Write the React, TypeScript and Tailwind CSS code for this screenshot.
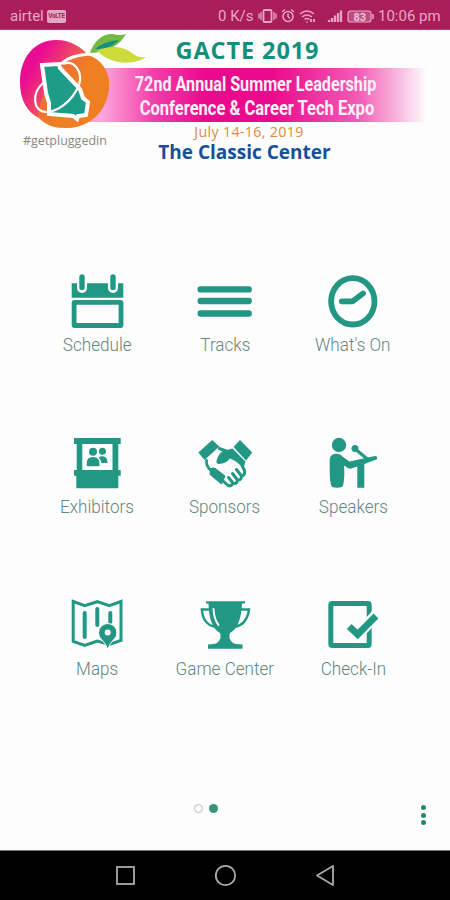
import * as React from "react";

interface MenuItem {
  label: string;
  icon: React.ReactNode;
}

const green = "#229783";

const menuItems: MenuItem[] = [
  {
    label: "Schedule",
    icon: (
      <>
        <path d="M4.700 13.300H56.300V27.700H4.700z" fill={green} />
        <path d="M15 9v9M46 9v9" stroke="white" strokeWidth="10" strokeLinecap="round" />
        <path d="M15 7v10.500M46 7v10.500" stroke={green} strokeWidth="5.400" strokeLinecap="round" />
        <rect x="7.100" y="32.300" width="46.900" height="23.200" rx="0.500" stroke={green} strokeWidth="4.800" />
      </>
    ),
  },
  {
    label: "Tracks",
    icon: (
      <path
        d="M5.700 19.400H53.700M5.700 31H53.700M5.700 43.500H53.700"
        stroke={green}
        strokeWidth="6.400"
        strokeLinecap="round"
      />
    ),
  },
  {
    label: "What's On",
    icon: (
      <>
        <ellipse cx="29.800" cy="31.300" rx="21.700" ry="23.200" stroke={green} strokeWidth="5.800" />
        <path
          d="M18.800 31.300H29.700L40 23.500"
          stroke={green}
          strokeWidth="5.800"
          strokeLinecap="round"
          strokeLinejoin="round"
        />
      </>
    ),
  },
  {
    label: "Exhibitors",
    icon: (
      <>
        <path
          d="M7 6H53.700V12H51.300V38H53.700V43.700H51.300V56.300H9.300V43.700H7V38H9.700V12H7z"
          fill={green}
        />
        <path d="M15.300 12H45.500V38H15.300z" fill="white" />
        <circle cx="26" cy="19.700" r="4" fill={green} />
        <circle cx="35.400" cy="19.200" r="3.500" fill={green} />
        <path d="M31.500 25.500Q34 23.700 37 24.500Q40.500 25.500 40.500 31H34.500Q34 27.500 31.500 25.500z" fill={green} />
        <path d="M19.700 34.300V31q0-6 6.300-6t6.500 6v3.300z" fill={green} />
      </>
    ),
  },
  {
    label: "Sponsors",
    icon: (
      <>
        <path d="M3.300 20.500L17.300 8L24.300 14.500L9.500 28z" fill={green} />
        <path d="M45 8L57.300 20.500L51 28.500L38.500 15z" fill={green} />
        <path
          d="M21.500 29Q23 22 28 19L37.500 16.500L50.500 29.500L48.500 36L41 29.500L35 26.500Q31 31.500 24 32Q21 32 21.500 29z"
          fill={green}
        />
        <path d="M24.300 16.500L31 19" stroke={green} strokeWidth="3" strokeLinecap="round" />
        <path d="M11.500 28.500Q11 34 15.500 38" stroke={green} strokeWidth="2.800" strokeLinecap="round" />
        <path d="M15.500 37Q18 34.500 21 37L30 44L26.500 52L15 42.500z" fill={green} stroke={green} strokeLinejoin="round" />
        <path
          d="M27 48L33 53.500Q36 55 38 51Q42 52.500 42.500 48Q46.500 48.500 46.500 44Q50.500 43.500 49.500 38.500L47 33.500M33.500 45.500L38 51M37.500 41.500L42.500 48M41.500 37.500L46.500 44"
          stroke={green}
          strokeWidth="3"
          strokeLinecap="round"
          strokeLinejoin="round"
        />
      </>
    ),
  },
  {
    label: "Speakers",
    icon: (
      <>
        <circle cx="16" cy="13" r="7.200" fill={green} />
        <path
          d="M8.500 54Q6.700 50 6.700 38V28Q6.700 22 13 21.700Q17 21.500 20 25L26.500 29.500L52 24Q54.500 24 54 27.300L41.300 32V55.700H34.300V34.500L27.500 36.800Q24 36 21 33.500Q22 45 20 54Q19 55.700 14 55.700T8.500 54z"
          fill={green}
        />
        <circle cx="32" cy="16.400" r="3.500" fill={green} />
        <path d="M34 18.500L45 27.500" stroke={green} strokeWidth="3.200" />
      </>
    ),
  },
  {
    label: "Maps",
    icon: (
      <>
        <path
          d="M6.200 7.500L17.700 11.700L30.300 7.700L42.300 11.700L54 7.500V46.500L42.300 50.500L30.300 47L17.700 51.500L6.200 47.500z"
          stroke={green}
          strokeWidth="3"
        />
        <path d="M17.700 19V43M30.300 15V31M43.300 19V28" stroke={green} strokeWidth="4" strokeLinecap="round" />
        <path
          d="M40.700 55.500Q39.500 50.500 35 46Q31.500 43 31.500 38.700A9.200 9.200 0 0 1 49.900 38.700Q49.900 43 46.400 46Q42 50.500 40.700 55.500z"
          fill={green}
          stroke="white"
          strokeWidth="1"
        />
        <circle cx="40.700" cy="38.500" r="3" fill="white" />
      </>
    ),
  },
  {
    label: "Game Center",
    icon: (
      <>
        <path
          d="M11 7.300H50V9.500H47Q46 33 35 39Q33 44 37 48Q38 50 47.500 50.500V54.700H13V50.500Q22 50 23 48Q27 44 25 39Q14 33 13.500 9.500H11z"
          fill={green}
        />
        <path
          d="M15 15.500H6.800Q8 31 21 33M46 15.500H54Q52 31 39 33"
          stroke={green}
          strokeWidth="2.400"
        />
        <path d="M18.500 15Q19 25 23.500 31" stroke="white" strokeWidth="2" strokeLinecap="round" />
      </>
    ),
  },
  {
    label: "Check-In",
    icon: (
      <>
        <rect x="7.800" y="9.500" width="38.400" height="42" rx="1.500" stroke={green} strokeWidth="5" />
        <path d="M26.700 34L34.700 41L54 20" stroke="white" strokeWidth="11" />
        <path d="M26.200 32.500L34.700 40.500L53 22" stroke={green} strokeWidth="6.800" />
      </>
    ),
  },
];

function StatusBar() {
  return (
    <div className="flex h-[30px] shrink-0 items-center border-b border-[#b04078] bg-[#a91d58] pt-[3px] pl-[10px] font-['Roboto',sans-serif] text-[14px] leading-none text-[#e9a5c4]">
      <span className="w-[35px] text-[15px]">airtel</span>
      <span className="mt-px ml-[2px] flex h-[13px] w-[19px] items-center justify-center rounded-[2px] bg-[#e9a5c4] text-[6.500px] font-bold tracking-tighter text-[#a91d58]">
        VoLTE
      </span>
      <span className="ml-[152px] w-[37px] text-[15px] whitespace-nowrap">0 K/s</span>
      <svg className="ml-[3px] shrink-0" width="116" height="18" viewBox="0 0 116 18" fill="none" stroke="#e9a5c4">
        <rect x="5.500" y="3" width="8" height="12" rx="1" strokeWidth="1.800" />
        <path d="M3 5v8M1 6.500v5M16 5v8M18 6.500v5" strokeWidth="1.300" />
        <circle cx="30" cy="9.500" r="5" strokeWidth="1.500" />
        <path d="M30 6.500v3l2 2M24 5l3-2.500M36 5l-3-2.500" strokeWidth="1.400" />
        <path d="M42 7q7-6 14 0M44 10q5-4 10 0M46.500 12.500q2.500-2 5 0" strokeWidth="1.600" />
        <path d="M48.500 15h1M53 15v-3M56 12v3" strokeWidth="1.800" />
        <path d="M71 15v-2M74 15v-4M77 15V8.500M80 15V6M83 15V3.500" strokeWidth="2.300" />
        <rect x="90" y="4" width="23" height="11" rx="2.500" fill="#e9a5c4" fillOpacity="0.350" strokeWidth="1.200" />
        <path d="M115 7v5" strokeWidth="1.500" />
        <text x="95.500" y="13.500" fontSize="11" fontWeight="700" fill="#f3c3d8" stroke="none">
          83
        </text>
      </svg>
      <span className="ml-[4px] text-[15px] whitespace-nowrap">10:06 pm</span>
    </div>
  );
}

function PeachLogo() {
  return (
    <svg className="absolute top-0 left-[10px]" width="150" height="104" viewBox="0 0 150 104" fill="none">
      <defs>
        <linearGradient id="peach" gradientUnits="userSpaceOnUse" x1="18" y1="28" x2="66" y2="58">
          <stop offset="0.150" stopColor="#ea0b93" />
          <stop offset="0.600" stopColor="#ee4568" />
          <stop offset="1" stopColor="#f07c25" />
        </linearGradient>
      </defs>
      <path
        d="M46 10C62 10 72 18 78 25C92 30 99 41 99 55C99 80 80 98 56 98C44 98 36 95 29 88C17 82 10 70 10 52C10 27 25 10 46 10z"
        fill="url(#peach)"
      />
      <path
        d="M52 36C58 27 68 24 78 25C92 30 99 41 99 55C99 80 80 98 56 98C44 98 36 95 29 88C27 80 32 60 52 36z"
        fill="#f08022"
        fillOpacity="0.700"
      />
      <path d="M51 34Q60 25 82 24" stroke="white" strokeWidth="3" />
      <path
        d="M32 35L49 34L50 38L70 59L73 68L78 72L76 85L68 86L67 89L63 86L39 84L39 73L36 63z"
        fill="#1f9b8a"
        stroke="white"
        strokeWidth="4"
      />
      <path
        d="M53 34C65 29 73 43 69 55C62 72 47 82 36 82C22 81 22 63 33 53"
        stroke="white"
        strokeWidth="2.200"
      />
      <path d="M80 23C84 10 94 3 103 4Q109 6 116 4C109 16 98 22 80 23z" fill="#75b944" />
      <path d="M85 19C92 13 100 11 109 10C102 17 94 19 85 19z" fill="#128f85" />
      <path d="M87 21C101 14 115 17 122 23Q127 28 136 27C126 34 104 37 87 21z" fill="#cbdc3b" />
    </svg>
  );
}

function Banner() {
  return (
    <header className="relative h-[134px] shrink-0">
      <h1 className="flex h-[38px] items-center justify-center pt-[3px] pl-[45px] font-['Open_Sans',sans-serif] text-[23.500px] leading-none font-bold tracking-[0.900px] whitespace-nowrap text-[#158f7c]">
        GACTE 2019
      </h1>
      <div className="ml-[85px] flex h-[54px] w-[342px] flex-col items-center justify-center bg-[linear-gradient(to_right,#fba6da_5%,#f23fa9_20%,#ec0a8c_35%,#ec0a8c_55%,#f35cb6_80%,#fdfdfd_100%)] pt-px font-['Roboto',sans-serif] text-[20px] leading-[24px] font-bold whitespace-nowrap text-[#fff0fa]">
        <span className="scale-x-[0.807]">72nd Annual Summer Leadership</span>
        <span className="ml-[2px] scale-x-[0.826]">Conference &amp; Career Tech Expo</span>
      </div>
      <p className="pl-[48px] text-center font-['Open_Sans',sans-serif] text-[14.300px] leading-[20px] tracking-[0.300px] text-[#df8a3d]">
        July 14-16, 2019
      </p>
      <p className="pl-[39px] text-center font-['Open_Sans',sans-serif] text-[19px] leading-[20px] font-bold text-[#15509b]">
        The Classic Center
      </p>
      <PeachLogo />
      <span className="absolute top-[103px] left-[23px] font-['Open_Sans',sans-serif] text-[12.500px] leading-[16px] text-[#8a8782]">
        #getpluggedin
      </span>
    </header>
  );
}

function NavigationBar() {
  return (
    <nav className="h-[50px] shrink-0 border-t border-[#777] bg-black">
      <svg width="450" height="49" viewBox="0 0 450 49" fill="none" stroke="#aaa" strokeWidth="1.800">
        <rect x="117" y="16" width="17" height="17" />
        <circle cx="225.500" cy="24.500" r="9.700" />
        <path d="M317 24.500L333 15V34z" strokeLinejoin="round" />
      </svg>
    </nav>
  );
}

export default function App() {
  return (
    <div className="flex h-[900px] w-[450px] flex-col overflow-hidden bg-[#fdfdfd]">
      <StatusBar />
      <Banner />
      <main className="mt-[106px] grid grid-cols-3 px-[33px]">
        {menuItems.map((item) => (
          <div key={item.label} className="flex h-[162px] flex-col items-center">
            <svg width="60" height="60" viewBox="0 0 60 60" fill="none">
              {item.icon}
            </svg>
            <span className="mt-[3px] scale-x-[0.950] font-['Roboto',sans-serif] text-[18px] leading-[24px] font-light whitespace-nowrap text-[#63867e]">
              {item.label}
            </span>
          </div>
        ))}
      </main>
      <footer className="relative flex grow items-center justify-center pt-[10px]">
        <div className="mr-[38px] flex gap-[6px]">
          <span className="size-[9px] rounded-full border border-[#bbb]" />
          <span className="size-[9px] rounded-full bg-[#38927a]" />
        </div>
        <div className="absolute top-[49px] right-[24px] flex flex-col gap-[2.500px]">
          <span className="size-[5px] rounded-full bg-[#28866f]" />
          <span className="size-[5px] rounded-full bg-[#28866f]" />
          <span className="size-[5px] rounded-full bg-[#28866f]" />
        </div>
      </footer>
      <NavigationBar />
    </div>
  );
}
